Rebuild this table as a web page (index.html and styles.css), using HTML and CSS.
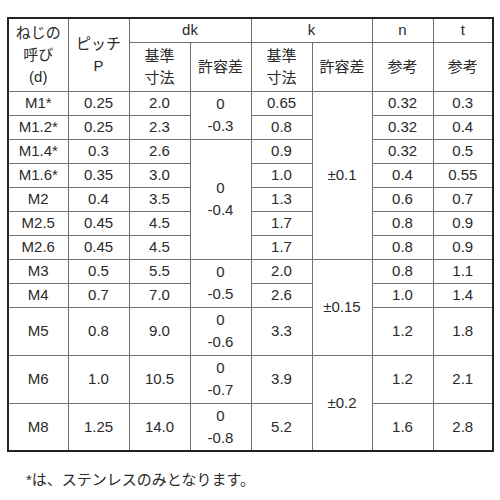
FILE: index.html
```html
<!DOCTYPE html>
<html lang="ja">
<head>
<meta charset="utf-8">
<link rel="stylesheet" href="styles.css">
</head>
<body>
<table class="spec">
  <colgroup>
    <col class="c60"><col class="c61"><col class="c61"><col class="c61"><col class="c61"><col class="c60"><col class="c61"><col class="c60">
  </colgroup>
  <tr class="h1">
    <td rowspan="2">ねじの<br>呼び<br>(d)</td>
    <td rowspan="2">ピッチ<br>P</td>
    <td colspan="2">dk</td>
    <td colspan="2">k</td>
    <td>n</td>
    <td>t</td>
  </tr>
  <tr class="h2">
    <td>基準<br>寸法</td>
    <td>許容差</td>
    <td>基準<br>寸法</td>
    <td>許容差</td>
    <td>参考</td>
    <td>参考</td>
  </tr>
  <tr class="r">
    <td>M1*</td><td>0.25</td><td>2.0</td><td rowspan="2">0<br>-0.3</td><td>0.65</td><td rowspan="7">±0.1</td><td>0.32</td><td>0.3</td>
  </tr>
  <tr class="r">
    <td>M1.2*</td><td>0.25</td><td>2.3</td><td>0.8</td><td>0.32</td><td>0.4</td>
  </tr>
  <tr class="r">
    <td>M1.4*</td><td>0.3</td><td>2.6</td><td rowspan="5">0<br>-0.4</td><td>0.9</td><td>0.32</td><td>0.5</td>
  </tr>
  <tr class="r">
    <td>M1.6*</td><td>0.35</td><td>3.0</td><td>1.0</td><td>0.4</td><td>0.55</td>
  </tr>
  <tr class="r">
    <td>M2</td><td>0.4</td><td>3.5</td><td>1.3</td><td>0.6</td><td>0.7</td>
  </tr>
  <tr class="r">
    <td>M2.5</td><td>0.45</td><td>4.5</td><td>1.7</td><td>0.8</td><td>0.9</td>
  </tr>
  <tr class="r">
    <td>M2.6</td><td>0.45</td><td>4.5</td><td>1.7</td><td>0.8</td><td>0.9</td>
  </tr>
  <tr class="r">
    <td>M3</td><td>0.5</td><td>5.5</td><td rowspan="2">0<br>-0.5</td><td>2.0</td><td rowspan="3">±0.15</td><td>0.8</td><td>1.1</td>
  </tr>
  <tr class="r">
    <td>M4</td><td>0.7</td><td>7.0</td><td>2.6</td><td>1.0</td><td>1.4</td>
  </tr>
  <tr class="rt">
    <td>M5</td><td>0.8</td><td>9.0</td><td>0<br>-0.6</td><td>3.3</td><td>1.2</td><td>1.8</td>
  </tr>
  <tr class="rt">
    <td>M6</td><td>1.0</td><td>10.5</td><td>0<br>-0.7</td><td>3.9</td><td rowspan="2">±0.2</td><td>1.2</td><td>2.1</td>
  </tr>
  <tr class="rt">
    <td>M8</td><td>1.25</td><td>14.0</td><td>0<br>-0.8</td><td>5.2</td><td>1.6</td><td>2.8</td>
  </tr>
</table>
<p class="note">*は、ステンレスのみとなります。</p>
</body>
</html>
```
FILE: styles.css
```css
html, body {
  margin: 0;
  padding: 0;
  background: #fff;
}
body {
  padding: 17px 0 0 7px;
  font-family: "Liberation Sans", Arial, "Noto Sans CJK JP", sans-serif;
  color: #2a2a2a;
}
.spec {
  border-collapse: collapse;
  table-layout: fixed;
  width: 486px;
  border: 2px solid #222;
  font-size: 15px;
}
.c60 { width: 60px; }
.c61 { width: 61px; }
.spec td {
  border: 1px solid #707070;
  text-align: center;
  vertical-align: middle;
  padding: 0;
  line-height: 22px;
}
.h1 { height: 24px; }
.h2 { height: 49px; }
.r { height: 24px; }
.rt { height: 48px; }
.note {
  margin: 16px 0 0 19px;
  font-size: 15px;
  font-family: "Liberation Sans", "Noto Sans CJK JP", sans-serif;
  color: #2a2a2a;
}
```
